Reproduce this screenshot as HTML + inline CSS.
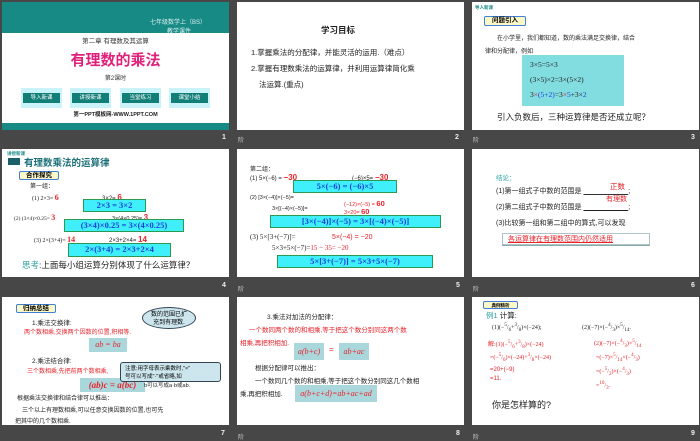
<!DOCTYPE html>
<html><head><meta charset="utf-8"><style>
*{margin:0;padding:0;box-sizing:border-box}
body{width:700px;height:438px;background:#474747;position:relative;overflow:hidden;font-family:"Liberation Sans","Noto Sans CJK SC",sans-serif}
.s{position:absolute;background:#fff;width:227px;height:128px;overflow:hidden}
.s div,.s span.a{position:absolute;white-space:nowrap}
.t{font-size:7px;color:#222}
.r{color:#e8232b}
.b{color:#1a3fe0}
.cy{background:#3ff0fa;border:1px solid #2a9a50;color:#1a3fe0;font-weight:bold;font-family:"Liberation Serif","Noto Serif CJK SC",serif;font-size:8.5px;text-align:center;line-height:11px}
.lb{position:absolute;background:#a9d7dc;color:#e8232b;font-style:italic;font-family:"Liberation Serif",serif;font-size:8px;line-height:14px;text-align:center}
.num{position:absolute;color:#eee;font-size:7px;font-weight:bold}
.ic{position:absolute;color:#ccc;font-size:6px}
.tag{background:#fdf8c8;border:1px solid #3f7fd6;border-radius:2px;font-size:6.5px;font-weight:bold;text-align:center;line-height:8px}
.btn{position:absolute;top:86px;width:41px;height:20px;background:#c9f3f8;}
.btn i{position:absolute;left:2px;top:5px;width:37px;height:10px;background:#127e78;color:#fff;font-style:normal;font-size:5.5px;text-align:center;line-height:10px}
</style></head><body>

<!-- slide 1 -->
<div class="s" style="left:2px;top:2px">
<div style="left:0;top:0;width:227px;height:31px;background:#178a86"></div>
<div style="left:148px;top:15px;font-size:6px;color:#d8f0ee">七年级数学上（BS）</div>
<div style="left:165px;top:24px;font-size:6px;color:#d8f0ee">教学课件</div>
<div style="left:0;top:33px;width:227px;text-align:center;font-size:6.5px;color:#333">第二章 有理数及其运算</div>
<div style="left:0;top:47px;width:227px;text-align:center;font-size:15px;font-weight:bold;color:#e0207a">有理数的乘法</div>
<div style="left:0;top:71px;width:227px;text-align:center;font-size:6px;color:#333">第2课时</div>
<div class="btn" style="left:19px"><i>导入新课</i></div>
<div class="btn" style="left:68px"><i>讲授新课</i></div>
<div class="btn" style="left:118px"><i>当堂练习</i></div>
<div class="btn" style="left:167px"><i>课堂小结</i></div>
<div style="left:0;top:108px;width:227px;text-align:center;font-size:5.5px;font-weight:bold;color:#222">第一PPT模板网-WWW.1PPT.COM</div>
<div style="left:0;top:121px;width:227px;height:7px;background:#178a86"></div>
</div>
<div class="num" style="left:222px;top:134px">1</div>
<div class="ic" style="left:238px;top:135px">阶</div>

<!-- slide 2 -->
<div class="s" style="left:237px;top:2px">
<div style="left:84px;top:22px;font-size:8.5px;font-weight:bold;color:#222">学习目标</div>
<div class="t" style="left:14px;top:45px;font-size:7.5px">1.掌握乘法的分配律，并能灵活的运用.（难点）</div>
<div class="t" style="left:14px;top:61px;font-size:7.5px">2.掌握有理数乘法的运算律，并利用运算律简化乘</div>
<div class="t" style="left:22px;top:77px;font-size:7.5px">法运算.(重点)</div>
</div>
<div class="num" style="left:455px;top:134px">2</div>
<div class="ic" style="left:473px;top:135px">阶</div>

<!-- slide 3 -->
<div class="s" style="left:472px;top:2px">
<div style="left:3px;top:3px;font-size:4.5px;color:#178a86;font-weight:bold">导入新课</div>
<div class="tag" style="left:12px;top:14px;width:42px;height:10px">问题引入</div>
<div class="t" style="left:25px;top:31px;font-size:6px">在小学里，我们都知道，数的乘法满足交换律，结合</div>
<div class="t" style="left:13px;top:44px;font-size:6px">律和分配律，例如</div>
<div style="left:50px;top:53px;width:102px;height:51px;background:#82dde0"></div>
<div class="t" style="left:58px;top:58px;font-size:7.5px;font-family:'Liberation Serif',serif">3×5=5×3</div>
<div class="t" style="left:58px;top:73px;font-size:7.5px;font-family:'Liberation Serif',serif">(3×5)×2=3×(5×2)</div>
<div class="t" style="left:58px;top:88px;font-size:7.5px;font-family:'Liberation Serif',serif">3<span class="r">×</span><span class="b">(5+2)</span>=3<span class="r">×</span><span class="b">5</span>+3×<span class="b">2</span></div>
<div class="t" style="left:25px;top:109px;font-size:8.5px">引入负数后，三种运算律是否还成立呢？</div>
</div>
<div class="num" style="left:691px;top:134px">3</div>

<!-- slide 4 -->
<div class="s" style="left:2px;top:149px">
<div style="left:5px;top:2px;font-size:4.5px;color:#178a86;font-weight:bold">讲授新课</div>
<div style="left:6px;top:9px;width:12px;height:7px;background:#1a5f6a"></div>
<div style="left:22px;top:6px;font-size:9.5px;font-weight:bold;color:#1a6f78">有理数乘法的运算律</div>
<div class="tag" style="left:17px;top:22px;width:40px;height:9px">合作探究</div>
<div class="t" style="left:28px;top:32px;font-size:6px">第一组：</div>
<div class="t" style="left:30px;top:44px;font-size:6px;font-family:'Liberation Serif',serif">(1)  2×3= <b class="r" style="font-size:8px">6</b></div>
<div class="t" style="left:100px;top:44px;font-size:6px">3×2= <b class="r" style="font-size:8px">6</b></div>
<div class="cy" style="left:81px;top:50px;width:63px;height:13px">2×3 = 3×2</div>
<div class="t" style="left:12px;top:64px;font-size:5.5px;font-family:'Liberation Serif',serif">(2)  (3×4)×0.25= <b class="r" style="font-size:8px">3</b></div>
<div class="t" style="left:110px;top:64px;font-size:5.5px">3×(4×0.25)= <b class="r" style="font-size:8px">3</b></div>
<div class="cy" style="left:62px;top:70px;width:120px;height:13px">(3×4)×0.25 = 3×(4×0.25)</div>
<div class="t" style="left:32px;top:86px;font-size:6px;font-family:'Liberation Serif',serif">(3)  2×(3+4)= <b class="r" style="font-size:8px">14</b></div>
<div class="t" style="left:107px;top:86px;font-size:6px">2×3+2×4= <b class="r" style="font-size:8px">14</b></div>
<div class="cy" style="left:66px;top:94px;width:103px;height:14px">2×(3+4) = 2×3+2×4</div>
<div class="t" style="left:20px;top:110px;font-size:8.5px"><span style="color:#2aa0a0">思考</span>:上面每小组运算分别体现了什么运算律？</div>
</div>
<div class="num" style="left:222px;top:282px">4</div>
<div class="ic" style="left:238px;top:284px">阶</div>

<!-- slide 5 -->
<div class="s" style="left:237px;top:149px">
<div class="t" style="left:13px;top:15px;font-size:6px">第二组：</div>
<div class="t" style="left:13px;top:24px;font-size:6px">(1)  5×(−6) =  <b class="r" style="font-size:8px">−30</b></div>
<div class="t" style="left:115px;top:24px;font-size:6px">(−6)×5=  <b class="r" style="font-size:8px">−30</b></div>
<div class="cy" style="left:56px;top:31px;width:104px;height:13px">5×(−6) = (−6)×5</div>
<div class="t" style="left:13px;top:46px;font-size:5.5px">(2)  [3×(−4)]×(−5)=</div>
<div class="t" style="left:107px;top:50px;font-size:5.5px;color:#e8232b">(−12)×(−5) = <b style="font-size:7.5px">60</b></div>
<div class="t" style="left:35px;top:57px;font-size:5.5px">3×[(−4)×(−5)]=</div>
<div class="t" style="left:107px;top:58px;font-size:5.5px;color:#e8232b">3×20= <b style="font-size:7.5px">60</b></div>
<div class="cy" style="left:33px;top:66px;width:171px;height:13px">[3×(−4)]×(−5) = 3×[(−4)×(−5)]</div>
<div class="t" style="left:13px;top:84px;font-size:7px;font-family:'Liberation Serif',serif">(3)   5×[3+(−7)]=</div>
<div class="t" style="left:95px;top:85px;font-size:7px;color:#e8232b">5×(−4) = −20</div>
<div class="t" style="left:35px;top:95px;font-size:7px;font-family:'Liberation Serif',serif">5×3+5×(−7)=<span class="r">15 − 35= −20</span></div>
<div class="cy" style="left:40px;top:106px;width:156px;height:13px">5×[3+(−7)]  =  5×3+5×(−7)</div>
</div>
<div class="num" style="left:456px;top:282px">5</div>
<div class="ic" style="left:473px;top:284px">阶</div>

<!-- slide 6 -->
<div class="s" style="left:472px;top:149px">
<div style="left:24px;top:23px;font-size:6.5px;color:#2aa0a0">结论：</div>
<div class="t" style="left:24px;top:37px;font-size:7px">(1)第一组式子中数的范围是 <u style="text-decoration-color:#333">&nbsp;&nbsp;&nbsp;&nbsp;&nbsp;&nbsp;&nbsp;&nbsp;&nbsp;&nbsp;&nbsp;&nbsp;&nbsp;&nbsp;&nbsp;&nbsp;&nbsp;&nbsp;&nbsp;&nbsp;&nbsp;&nbsp;&nbsp;</u>;</div>
<div style="left:138px;top:32px;font-size:7.5px;color:#e8232b">正数</div>
<div class="t" style="left:24px;top:53px;font-size:7px">(2)第二组式子中数的范围是 <u>&nbsp;&nbsp;&nbsp;&nbsp;&nbsp;&nbsp;&nbsp;&nbsp;&nbsp;&nbsp;&nbsp;&nbsp;&nbsp;&nbsp;&nbsp;&nbsp;&nbsp;&nbsp;&nbsp;&nbsp;&nbsp;&nbsp;&nbsp;</u>;</div>
<div style="left:134px;top:45px;font-size:7px;color:#e8232b">有理数</div>
<div class="t" style="left:24px;top:69px;font-size:7px">(3)比较第一组和第二组中的算式,可以发现</div>
<div style="left:30px;top:84px;width:148px;height:12px;border:1px solid #b0c4c8;box-shadow:0 1px 0 #8aa"></div>
<div style="left:36px;top:85px;font-size:7px;color:#e8232b;text-decoration:underline">各运算律在有理数范围内仍然适用</div>
</div>
<div class="num" style="left:691px;top:282px">6</div>

<!-- slide 7 -->
<div class="s" style="left:2px;top:297px">
<div class="tag" style="left:14px;top:7px;width:40px;height:9px">归纳总结</div>
<div class="t" style="left:30px;top:20px;font-size:6.5px">1.乘法交换律:</div>
<div style="left:22px;top:30px;font-size:6px;color:#e8232b">两个数相乘,交换两个因数的位置,积相等.</div>
<div class="lb" style="left:87px;top:41px;width:38px">ab = ba</div>
<div class="t" style="left:30px;top:58px;font-size:6.5px">2.乘法结合律:</div>
<div style="left:25px;top:69px;font-size:6px;color:#e8232b">三个数相乘,先把前两个数相乘,</div>
<div class="lb" style="left:78px;top:81px;width:65px;font-size:9px;font-weight:bold">(ab)c = a(bc)</div>
<div class="t" style="left:142px;top:84px;font-size:5.5px">b可以写成a·b或ab.</div>
<div style="left:140px;top:10px;width:54px;height:22px;border:1px solid #345;border-radius:50%;background:#cde6ee;font-size:6px;text-align:center;line-height:8px;padding-top:3px">数的范围已扩<br>充到有理数.</div>
<div style="left:118px;top:65px;width:101px;height:20px;border:1px solid #345;border-radius:3px;background:#cde6ee;font-size:5.5px;line-height:8px;padding:2px 4px">注意:用字母表示乘数时,"×"<br>号可以写成"·"或省略,如</div>
<div class="t" style="left:15px;top:96px;font-size:6px">根据乘法交换律和结合律可以推出：</div>
<div class="t" style="left:20px;top:108px;font-size:6px">三个以上有理数相乘,可以任意交换因数的位置,也可先</div>
<div class="t" style="left:13px;top:119px;font-size:6px">把其中的几个数相乘.</div>
</div>
<div class="num" style="left:221px;top:430px">7</div>
<div class="ic" style="left:238px;top:432px">阶</div>

<!-- slide 8 -->
<div class="s" style="left:237px;top:297px">
<div class="t" style="left:30px;top:14px;font-size:6.5px">3.乘法对加法的分配律：</div>
<div style="left:12px;top:27px;font-size:6.5px;color:#e8232b">一个数同两个数的和相乘,等于把这个数分别同这两个数</div>
<div style="left:3px;top:40px;font-size:6.5px;color:#e8232b">相乘,再把积相加.</div>
<div class="lb" style="left:57px;top:46px;width:30px;height:17px;line-height:17px">a(b+c)</div>
<div style="left:92px;top:48px;font-size:8px;color:#e8232b">=</div>
<div class="lb" style="left:102px;top:46px;width:30px;height:17px;line-height:17px">ab+ac</div>
<div class="t" style="left:18px;top:65px;font-size:6.5px">根据分配律可以推出：</div>
<div class="t" style="left:18px;top:78px;font-size:6.5px">一个数同几个数的和相乘,等于把这个数分别同这几个数相</div>
<div class="t" style="left:3px;top:91px;font-size:6.5px">乘,再把积相加.</div>
<div class="lb" style="left:58px;top:88px;width:82px;height:17px;line-height:17px">a(b+c+d)=ab+ac+ad</div>
</div>
<div class="num" style="left:456px;top:430px">8</div>
<div class="ic" style="left:473px;top:432px">阶</div>

<!-- slide 9 -->
<div class="s" style="left:472px;top:297px">
<div class="tag" style="left:11px;top:4px;width:35px;height:8px;font-size:4.5px">典例精析</div>
<div style="left:14px;top:13px;font-size:7.5px;color:#2aa0a0">例1 <span style="color:#222">计算:</span></div>
<div class="t" style="left:20px;top:26px;font-size:6px;font-family:'Liberation Serif',serif">(1)(−<sup>5</sup>/<sub>6</sub>+<sup>3</sup>/<sub>8</sub>)×(−24);</div>
<div class="t" style="left:110px;top:26px;font-size:6px;font-family:'Liberation Serif',serif">(2)(−7)×(−<sup>4</sup>/<sub>3</sub>)×<sup>5</sup>/<sub>14</sub>.</div>
<div style="left:16px;top:42px;font-size:6px;color:#e8232b;font-family:'Liberation Serif',serif">解:(1)(−<sup>5</sup>/<sub>6</sub>+<sup>3</sup>/<sub>8</sub>)×(−24)</div>
<div style="left:18px;top:56px;font-size:6px;color:#e8232b;font-family:'Liberation Serif',serif">=(−<sup>5</sup>/<sub>6</sub>)×(−24)+<sup>3</sup>/<sub>8</sub>×(−24)</div>
<div style="left:18px;top:70px;font-size:6px;color:#e8232b">=20+(−9)</div>
<div style="left:18px;top:79px;font-size:6px;color:#e8232b">=11.</div>
<div style="left:122px;top:42px;font-size:6px;color:#e8232b;font-family:'Liberation Serif',serif">(2)(−7)×(−<sup>4</sup>/<sub>3</sub>)×<sup>5</sup>/<sub>14</sub></div>
<div style="left:124px;top:56px;font-size:6px;color:#e8232b;font-family:'Liberation Serif',serif">=(−7)×<sup>5</sup>/<sub>14</sub>×(−<sup>4</sup>/<sub>3</sub>)</div>
<div style="left:124px;top:70px;font-size:6px;color:#e8232b;font-family:'Liberation Serif',serif">=(−<sup>5</sup>/<sub>2</sub>)×(−<sup>4</sup>/<sub>3</sub>)</div>
<div style="left:124px;top:84px;font-size:6px;color:#e8232b;font-family:'Liberation Serif',serif">=<sup>10</sup>/<sub>3</sub>.</div>
<div class="t" style="left:20px;top:101px;font-size:9px">你是怎样算的?</div>
</div>
<div class="num" style="left:691px;top:430px">9</div>

</body></html>
